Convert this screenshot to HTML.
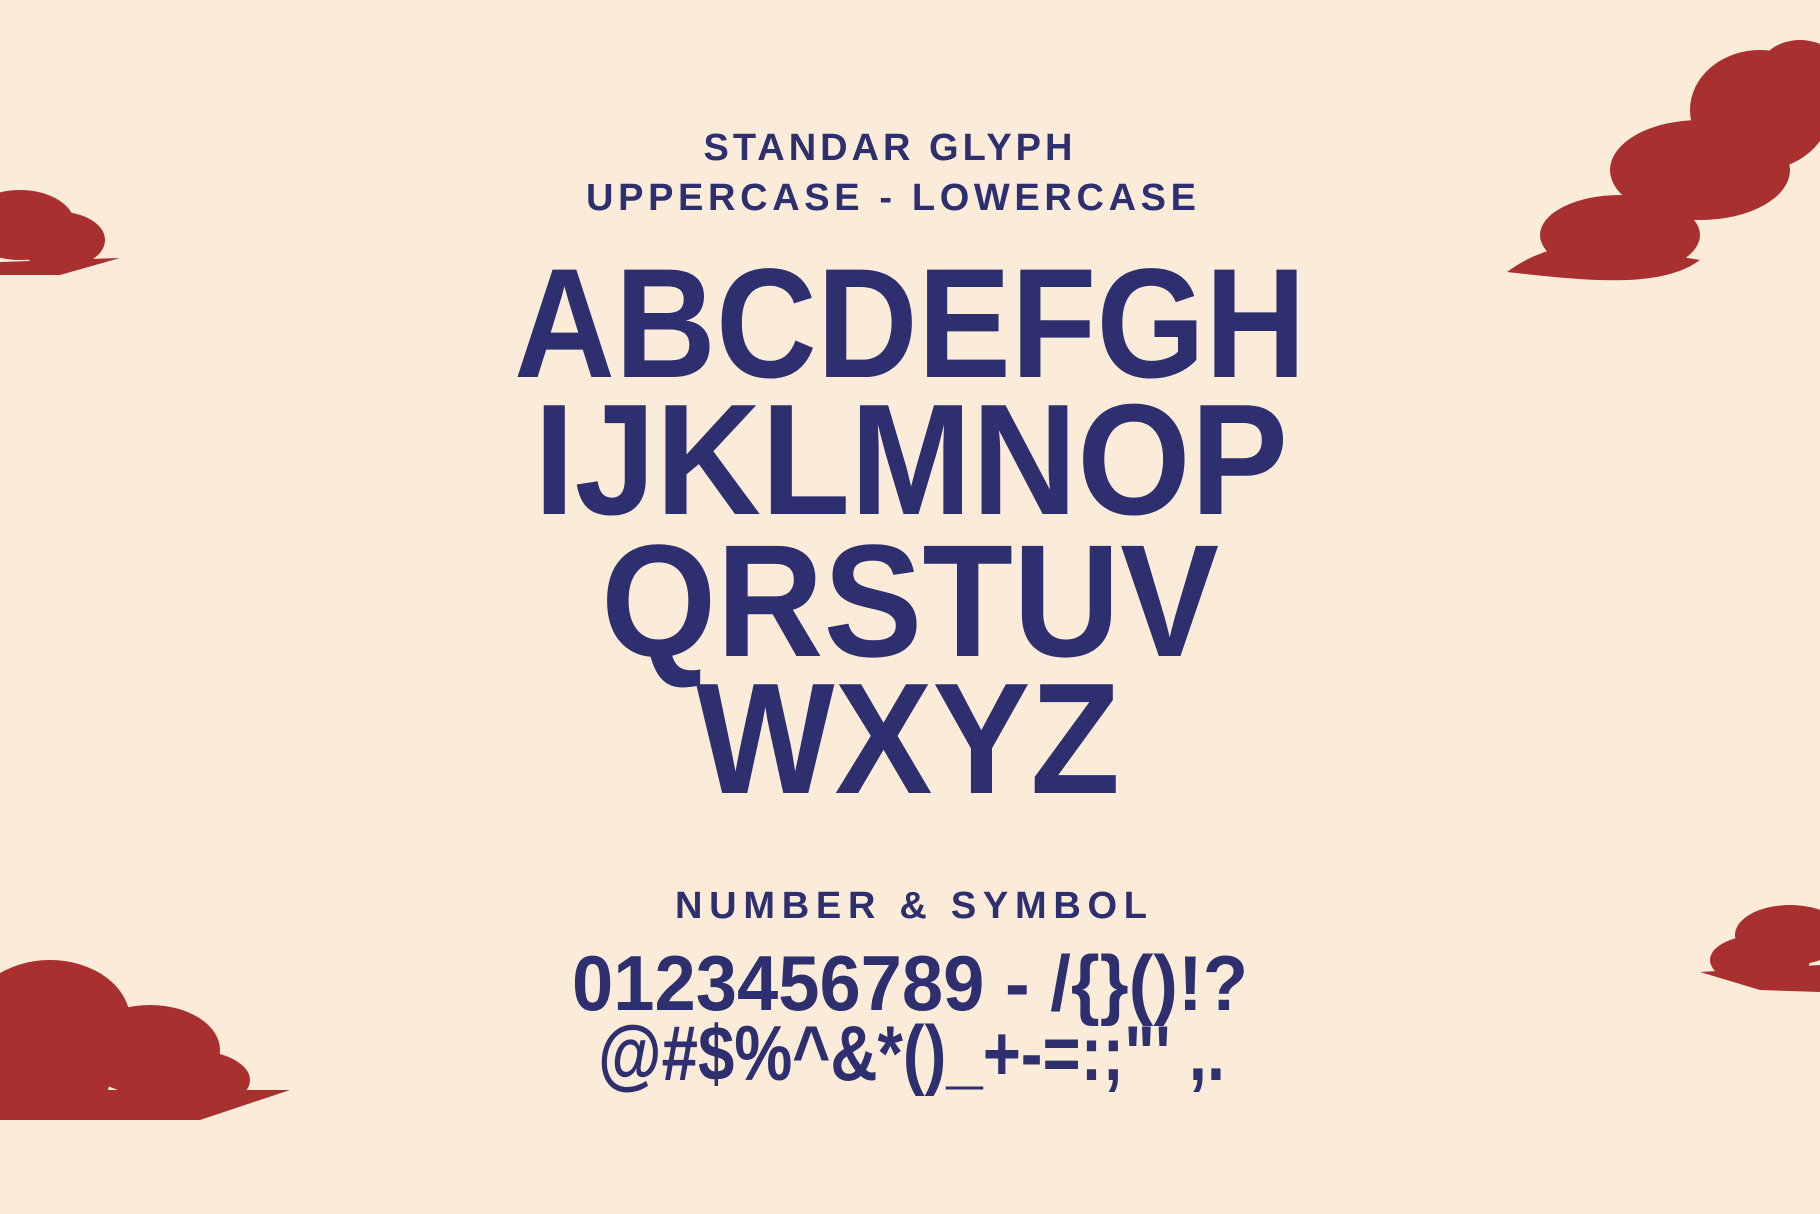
<!DOCTYPE html>
<html><head><meta charset="utf-8"><style>
html,body{margin:0;padding:0;background:#fbecd9;width:1820px;height:1214px;overflow:hidden}
svg{position:absolute;left:0;top:0}
</style></head><body>
<svg width="1820" height="1214" viewBox="0 0 1820 1214" xmlns="http://www.w3.org/2000/svg">
<rect width="1820" height="1214" fill="#fbecd9"/>
<g font-family="'Liberation Sans',sans-serif" font-weight="bold" fill="#2e2f6e">
<text x="890" y="160" font-size="38" text-anchor="middle" letter-spacing="4">STANDAR GLYPH</text>
<text x="586" y="210" font-size="38" textLength="610" lengthAdjust="spacing">UPPERCASE - LOWERCASE</text>
<text x="514" y="377" font-size="156" textLength="792" lengthAdjust="spacingAndGlyphs">ABCDEFGH</text>
<text x="534" y="514" font-size="158" textLength="754" lengthAdjust="spacingAndGlyphs">IJKLMNOP</text>
<text x="601" y="656" font-size="160" textLength="618" lengthAdjust="spacingAndGlyphs">QRSTUV</text>
<text x="696" y="793" font-size="158" textLength="424" lengthAdjust="spacingAndGlyphs">WXYZ</text>
<text x="675" y="918" font-size="38" textLength="472" lengthAdjust="spacing">NUMBER &amp; SYMBOL</text>
<text x="572" y="1010" font-size="78" textLength="676" lengthAdjust="spacingAndGlyphs">0123456789 - /{}()!?</text>
<text x="598" y="1080" font-size="78" textLength="627" lengthAdjust="spacingAndGlyphs">@#$%^&amp;*()_+-=:;"' ,.</text>
</g>
<g fill="#a8302f">
<!-- left top -->
<ellipse cx="20" cy="225" rx="55" ry="35"/><ellipse cx="60" cy="240" rx="45" ry="28"/><path d="M0 262 L120 258 L60 275 L0 275Z"/>
<!-- right top -->
<ellipse cx="1760" cy="110" rx="70" ry="60"/><ellipse cx="1700" cy="170" rx="90" ry="50"/><ellipse cx="1620" cy="235" rx="80" ry="40"/><ellipse cx="1800" cy="70" rx="40" ry="30"/>
<path d="M1507 272 C1550 240 1600 240 1640 250 L1700 260 C1660 290 1580 280 1507 272Z"/>
<!-- left bottom -->
<ellipse cx="50" cy="1020" rx="80" ry="60"/><ellipse cx="150" cy="1050" rx="70" ry="45"/><ellipse cx="40" cy="1080" rx="70" ry="40"/><ellipse cx="190" cy="1080" rx="60" ry="30"/>
<path d="M0 1090 L290 1090 L200 1120 L0 1120Z"/>
<!-- right bottom -->
<ellipse cx="1790" cy="935" rx="55" ry="30"/><ellipse cx="1760" cy="960" rx="50" ry="25"/><path d="M1700 972 L1820 965 L1820 992 L1760 990Z"/>
</g>
</svg>
</body></html>
